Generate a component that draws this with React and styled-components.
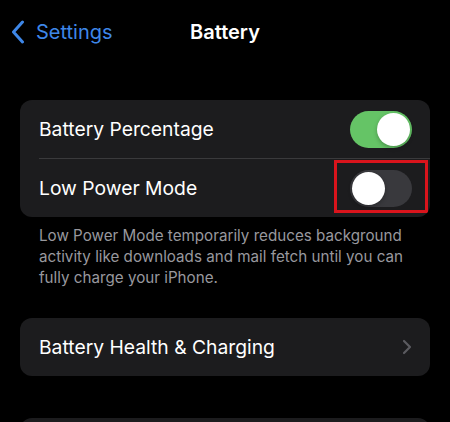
import React from 'react'
import styled, { createGlobalStyle } from 'styled-components'

const GlobalStyle = createGlobalStyle`
  html, body {
    margin: 0;
    padding: 0;
    background: #000;
  }
  body {
    font-family: Inter, "Liberation Sans", sans-serif;
    -webkit-font-smoothing: antialiased;
  }
`

const Screen = styled.div`
  width: 450px;
  height: 422px;
  overflow: hidden;
  background: #000;
  color: #fff;
`

const NavBar = styled.div`
  position: relative;
  height: 64px;
  display: flex;
  align-items: center;
  padding: 0 11px;
`

const BackLink = styled.div`
  display: flex;
  align-items: center;
  gap: 11px;
  color: #3e87e8;
  font-size: 20px;
`

const Title = styled.div`
  position: absolute;
  left: 0;
  right: 0;
  text-align: center;
  font-size: 20px;
  font-weight: 600;
  pointer-events: none;
`

const Content = styled.div`
  padding: 36px 20px 0;
  display: flex;
  flex-direction: column;
`

const Group = styled.div`
  background: #1c1c1e;
  border-radius: 12px;
  overflow: hidden;
  margin-bottom: ${p => p.$gap || 0}px;
`

const Row = styled.div`
  position: relative;
  height: 58px;
  display: flex;
  align-items: center;
  justify-content: space-between;
  padding: 0 18px 0 19px;
  font-size: 19.3px;

  & + & {
    border-top: 1px solid #3a3a3c;
    margin-left: 19px;
    padding-left: 0;
  }
`

const Track = styled.div`
  width: 62px;
  height: 37px;
  border-radius: 19px;
  background: ${p => (p.$on ? '#65c466' : '#39393d')};
  display: flex;
  align-items: center;
  justify-content: ${p => (p.$on ? 'flex-end' : 'flex-start')};
  padding: 0 2px;
  box-sizing: border-box;
`

const Knob = styled.div`
  width: 33px;
  height: 33px;
  border-radius: 50%;
  background: #fff;
  box-shadow: 0 2px 4px rgba(0, 0, 0, 0.25);
`

const Highlight = styled.div`
  position: absolute;
  right: 2px;
  top: 1px;
  width: 88px;
  height: 47px;
  border: 3px solid #d9141c;
`

const Footnote = styled.p`
  margin: 8px 0 30px;
  padding: 0 10px 0 19px;
  font-size: 15.2px;
  line-height: 21px;
  color: #98989e;
`

const Toggle = ({ on }) => (
  <Track $on={on}>
    <Knob />
  </Track>
)

const Chevron = () => (
  <svg width="10" height="16" viewBox="0 0 10 16" fill="none">
    <path d="M2 2l6 6-6 6" stroke="#5b5b60" strokeWidth="2.2" strokeLinecap="round" strokeLinejoin="round" />
  </svg>
)

const BackChevron = () => (
  <svg width="14" height="24" viewBox="0 0 14 24" fill="none">
    <path d="M11.5 2L2.5 12l9 10" stroke="#3e87e8" strokeWidth="3" strokeLinecap="round" strokeLinejoin="round" />
  </svg>
)

const App = () => (
  <Screen>
    <GlobalStyle />
    <NavBar>
      <BackLink>
        <BackChevron />
        <span>Settings</span>
      </BackLink>
      <Title>Battery</Title>
    </NavBar>
    <Content>
      <Group>
        <Row>
          Battery Percentage
          <Toggle on />
        </Row>
        <Row>
          Low Power Mode
          <Toggle />
          <Highlight />
        </Row>
      </Group>
      <Footnote>
        Low Power Mode temporarily reduces background activity like downloads and mail fetch until you can fully charge your iPhone.
      </Footnote>
      <Group $gap={42}>
        <Row>
          Battery Health &amp; Charging
          <Chevron />
        </Row>
      </Group>
      <Group>
        <Row />
      </Group>
    </Content>
  </Screen>
)

export default App
